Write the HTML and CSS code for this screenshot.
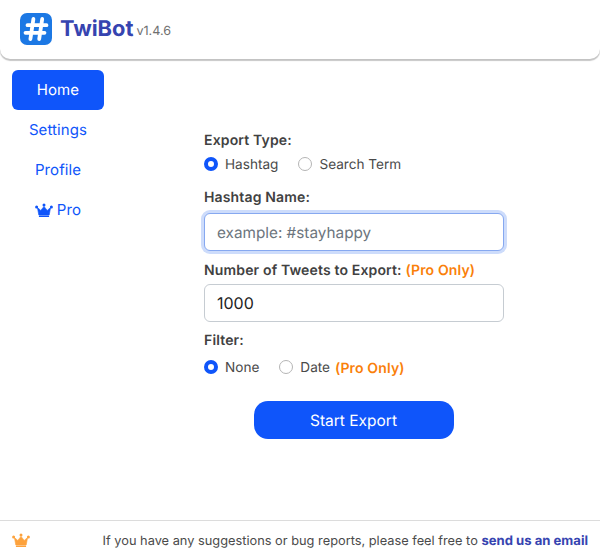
FILE: index.html
```html
<!DOCTYPE html>
<html lang="en">
<head>
<meta charset="utf-8">
<title>TwiBot</title>
<link rel="stylesheet" href="styles.css">
</head>
<body>
<header class="header">
  <svg class="logo" viewBox="0 0 32 32" aria-hidden="true">
    <rect width="32" height="32" rx="7" fill="#1c78e4"/>
    <path d="M13.4 6 10.4 26M22.2 6 19.2 26M7.5 12.2H26.5M5.5 19.8H24.5" fill="none" stroke="#fff" stroke-width="3.8" stroke-linecap="round"/>
  </svg>
  <span class="brand">TwiBot</span>
  <span class="version">v1.4.6</span>
</header>
<div class="main">
  <nav class="nav">
    <a class="nav-item active">Home</a>
    <a class="nav-item">Settings</a>
    <a class="nav-item">Profile</a>
    <a class="nav-item">
      <svg class="crown crown-nav" viewBox="0 0 18 14" aria-hidden="true"><use href="#crown-shape"/></svg>Pro
    </a>
  </nav>
  <form class="form">
    <div class="label">Export Type:</div>
    <div class="radios">
      <label class="radio"><span class="dot on"></span>Hashtag</label>
      <label class="radio"><span class="dot"></span>Search Term</label>
    </div>
    <div class="label label-name">Hashtag Name:</div>
    <div class="input focus placeholder">example: #stayhappy</div>
    <div class="label label-num">Number of Tweets to Export: <span class="pro">(Pro Only)</span></div>
    <div class="input">1000</div>
    <div class="label label-filter">Filter:</div>
    <div class="radios radios-filter">
      <label class="radio"><span class="dot on"></span>None</label>
      <label class="radio"><span class="dot"></span>Date&nbsp;<span class="pro">(Pro Only)</span></label>
    </div>
    <button class="start" type="button">Start Export</button>
  </form>
</div>
<footer class="footer">
  <svg class="crown crown-foot" viewBox="0 0 18 14" aria-hidden="true"><use href="#crown-shape"/></svg>
  <span class="foot-text">If you have any suggestions or bug reports, please feel free to <a class="mail">send us an email</a></span>
</footer>
<svg class="defs" aria-hidden="true">
  <defs>
    <g id="crown-shape">
      <path d="M9 3.4 12.2 7.4 15.6 4.6 14.2 12H3.8L2.4 4.6 5.8 7.4Z" fill="currentColor" stroke="currentColor" stroke-width=".6" stroke-linejoin="round"/>
      <rect x="3.9" y="12.4" width="10.2" height="1.5" rx=".5" fill="currentColor"/>
      <circle cx="9" cy="2" r="1.5" fill="currentColor"/>
      <circle cx="1.6" cy="4" r="1.5" fill="currentColor"/>
      <circle cx="16.4" cy="4" r="1.5" fill="currentColor"/>
    </g>
  </defs>
</svg>
</body>
</html>
```

FILE: styles.css
```css
* { box-sizing: border-box; }
html, body { height: 100%; }
body {
  margin: 0;
  height: 559px;
  display: flex;
  flex-direction: column;
  overflow: hidden;
  background: #fff;
  font-family: Inter, "Liberation Sans", sans-serif;
  color: #4a4a4a;
  text-rendering: geometricPrecision;
}
.defs { width: 0; height: 0; display: block; position: absolute; }
.header {
  height: 59px;
  flex: none;
  display: flex;
  align-items: center;
  padding: 0 0 0 20px;
  background: #fff;
  border-radius: 0 0 10px 10px;
  box-shadow: 0 2px 1px rgba(0, 0, 0, .22), 0 0 2px rgba(0, 0, 0, .08);
}
.logo { width: 32px; height: 32px; margin-top: -1px; flex: none; }
.brand {
  margin-left: 8px;
  font-size: 21.8px;
  font-weight: 700;
  color: #3644b0;
  line-height: 1;
}
.version {
  margin-left: 3px;
  margin-top: 4px;
  font-size: 12.6px;
  color: #6f6f6f;
}
.main { flex: 1; display: flex; min-height: 0; }
.nav {
  width: 92px;
  margin: 11px 0 0 12px;
  flex: none;
  display: flex;
  flex-direction: column;
}
.nav-item {
  height: 40px;
  padding-bottom: 1px;
  display: flex;
  align-items: center;
  justify-content: center;
  font-size: 15px;
  letter-spacing: .1px;
  color: #0f55fa;
  border-radius: 6px;
}
.nav-item.active { background: #0f55fa; color: #fff; }
.crown { display: block; flex: none; }
.crown-nav { width: 18px; height: 14px; margin-right: 4px; color: #0f55fa; }
.crown-foot { width: 18px; height: 14px; margin-top: -2px; color: #fda23c; }
.form {
  width: 300px;
  margin-left: 100px;
  padding-top: 73px;
  display: flex;
  flex-direction: column;
}
.label {
  font-size: 14px;
  font-weight: 600;
  line-height: 17px;
  letter-spacing: .15px;
  color: #414141;
}
.pro { color: #fa7f0a; font-weight: 600; }
.radios {
  display: flex;
  gap: 20px;
  margin-top: 5px;
  height: 20px;
  align-items: center;
}
.radio {
  display: flex;
  align-items: center;
  padding-top: 2px;
  font-size: 13.6px;
  color: #4a4a4a;
}
.radio .pro { margin-left: 1px; font-size: 14px; letter-spacing: .15px; }
.dot {
  width: 14px;
  height: 14px;
  margin: -2px 7px 0 0;
  border-radius: 50%;
  border: 1px solid #b5b5b5;
  background: #fff;
}
.dot.on { border: 4px solid #0f55fa; }
.label-name { margin-top: 15px; }
.input {
  height: 38px;
  margin-top: 7px;
  padding: 0 12px;
  display: flex;
  align-items: center;
  font-size: 16px;
  color: #222;
  background: #fff;
  border: 1px solid #c6ccd2;
  border-radius: 6px;
}
.input.focus {
  border-color: #86a8f0;
  box-shadow: 0 0 0 3px #cddcfb;
}
.input.placeholder { font-size: 15.3px; color: #6c757d; }
.label-num { margin-top: 11px; margin-bottom: -2px; }
.label-filter { margin-top: 10px; }
.radios-filter { margin-top: 8px; }
.start {
  align-self: center;
  width: 200px;
  height: 38px;
  margin-top: 24px;
  margin-left: -1px;
  border: 0;
  border-radius: 14px;
  background: #0f55fa;
  color: #fff;
  font: 400 15.5px Inter, "Liberation Sans", sans-serif;
  text-rendering: geometricPrecision;
}
.footer {
  height: 39px;
  flex: none;
  display: flex;
  align-items: center;
  justify-content: space-between;
  padding: 1px 12px 0;
  border-top: 1px solid #dcdcdc;
}
.foot-text { font-size: 12.8px; color: #4a4a4a; }
.mail { font-size: 13.1px; color: #3644b0; font-weight: 700; }
```
